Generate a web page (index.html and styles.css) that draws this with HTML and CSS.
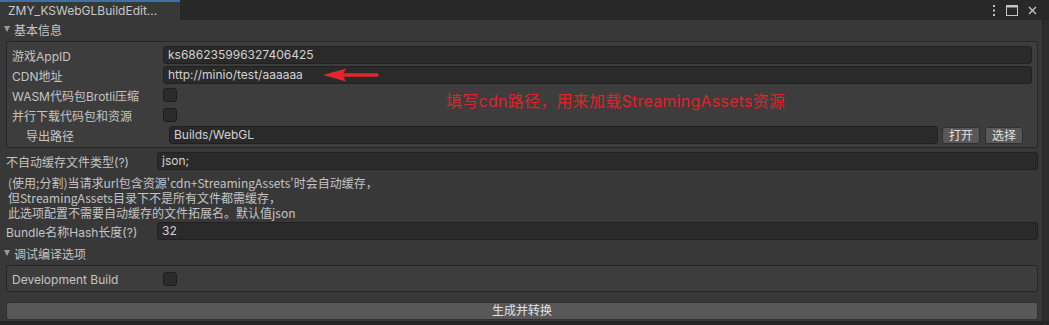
FILE: index.html
```html
<!DOCTYPE html>
<html lang="zh-CN">
<head>
    <meta charset="UTF-8">
    <meta name="viewport" content="width=device-width, initial-scale=1.0">
    <title>ZMY_KSWebGLBuildEditor</title>
    <link rel="stylesheet" href="styles.css">
</head>
<body>
    <div class="window">
        <div class="titlebar">
            <div class="tab">ZMY_KSWebGLBuildEdit...</div>
            <div class="win-icons">
                <svg width="4" height="11" viewBox="0 0 4 11"><rect x="1" y="0" width="2" height="2" fill="#c4c4c4"/><rect x="1" y="4.5" width="2" height="2" fill="#c4c4c4"/><rect x="1" y="9" width="2" height="2" fill="#c4c4c4"/></svg>
                <svg width="12" height="11" viewBox="0 0 12 11"><rect x="0.5" y="0.5" width="11" height="10" fill="none" stroke="#c4c4c4"/><rect x="0" y="0" width="12" height="2.5" fill="#c4c4c4"/></svg>
                <svg width="9" height="9" viewBox="0 0 9 9"><path d="M1 1 L8 8 M8 1 L1 8" stroke="#c4c4c4" stroke-width="1.4"/></svg>
            </div>
        </div>

        <div class="body">
            <div class="panel">
                <div class="foldout"><span class="tri"></span>基本信息</div>
                <div class="group">
                    <div class="row"><div class="label">游戏AppID</div><div class="field">ks686235996327406425</div></div>
                    <div class="row"><div class="label">CDN地址</div><div class="field">http://minio/test/aaaaaa</div></div>
                    <div class="row"><div class="label">WASM代码包Brotli压缩</div><div class="check"></div></div>
                    <div class="row"><div class="label">并行下载代码包和资源</div><div class="check"></div></div>
                    <div class="row indent">
                        <div class="label">导出路径</div>
                        <div class="field">Builds/WebGL</div>
                        <div class="btns">
                            <button class="btn">打开</button>
                            <button class="btn">选择</button>
                        </div>
                    </div>

                    <!-- red annotation drawn over the form -->
                    <svg class="arrow" width="60" height="14" viewBox="0 0 60 14">
                        <path d="M0 7 L23 0.5 L19.5 7 L23 13.5 Z" fill="#e3262c"/>
                        <path d="M18 7 L54 7" stroke="#e3262c" stroke-width="3.6" stroke-linecap="round"/>
                    </svg>
                    <div class="note">填写cdn路径，用来加载StreamingAssets资源</div>
                </div>

                <div class="row outer"><div class="label">不自动缓存文件类型(?)</div><div class="field">json;</div></div>
                <div class="help">
                    <p>(使用;分割)当请求url包含资源'cdn+StreamingAssets'时会自动缓存，</p>
                    <p>但StreamingAssets目录下不是所有文件都需缓存，</p>
                    <p>此选项配置不需要自动缓存的文件拓展名。默认值json</p>
                </div>
                <div class="row outer bundle"><div class="label">Bundle名称Hash长度(?)</div><div class="field">32</div></div>

                <div class="foldout second"><span class="tri"></span>调试编译选项</div>
                <div class="group">
                    <div class="row"><div class="label">Development Build</div><div class="check"></div></div>
                </div>

                <button class="build">生成并转换</button>
            </div>
            <div class="scroll"></div>
        </div>
        <div class="strip"></div>
    </div>
</body>
</html>
```

FILE: styles.css
```css
* {
    margin: 0;
    padding: 0;
    box-sizing: border-box;
}

body {
    background-color: #282828;
    font-family: 'Inter', 'Noto Sans CJK SC', sans-serif;
    font-size: 12px;
    color: #c4c4c4;
}

.window {
    width: 1049px;
    height: 325px;
    display: flex;
    flex-direction: column;
    overflow: hidden;
}

.titlebar {
    height: 20px;
    display: flex;
    align-items: stretch;
    background-color: #282828;
}

.tab {
    width: 180px;
    background-color: #383838;
    border-top: 2px solid #3a72b0;
    padding-left: 8px;
    line-height: 17px;
    font-size: 12px;
    color: #c8c8c8;
}

.win-icons {
    margin-left: auto;
    display: flex;
    align-items: center;
    gap: 10px;
    padding-right: 12px;
}

.body {
    flex: 1;
    display: flex;
}

.panel {
    width: 1042px;
    background-color: #383838;
    padding: 0 4px 0 6px;
}

.scroll {
    flex: 1;
    background-color: #2c2c2c;
    border-left: 1px solid #232323;
}

.strip {
    height: 4px;
    background-color: #242424;
}

.foldout {
    height: 18px;
    display: flex;
    align-items: center;
    gap: 4px;
    margin-left: -2px;
    color: #c4c4c4;
}

.foldout.second {
    margin-top: 4px;
}

.tri {
    width: 0;
    height: 0;
    border-left: 3.5px solid transparent;
    border-right: 3.5px solid transparent;
    border-top: 6px solid #9a9a9a;
}

.group {
    position: relative;
    margin-top: 3px;
    background-color: #3d3d3d;
    border: 1px solid #262626;
    border-radius: 3px;
    padding: 4px 5px 3px 5px;
    display: flex;
    flex-direction: column;
    gap: 2px;
}

.row {
    height: 18px;
    display: flex;
    align-items: center;
}

.label {
    width: 151px;
    flex-shrink: 0;
    white-space: nowrap;
}

.field {
    flex: 1;
    height: 18px;
    background-color: #2a2a2a;
    border: 1px solid #212121;
    border-radius: 3px;
    padding-left: 4px;
    line-height: 16px;
    color: #d2d2d2;
}

.check {
    width: 14px;
    height: 14px;
    background-color: #2b2b2b;
    border: 1px solid #1c1c1c;
    border-radius: 3px;
}

.row.indent {
    padding-left: 14px;
    padding-right: 9px;
}

.row.indent .label {
    width: 143px;
}

.btns {
    display: flex;
    gap: 5px;
    margin-left: 4px;
}

.btn {
    width: 38px;
    height: 17px;
    background-color: #585858;
    border: 1px solid #303030;
    border-radius: 3px;
    font-family: inherit;
    font-size: 12px;
    color: #e0e0e0;
    line-height: 15px;
}

.row.outer {
    margin-top: 4px;
}

.row.bundle {
    margin-top: 2px;
}

.help {
    margin-top: 5px;
    padding-left: 2px;
    line-height: 15px;
    font-family: 'Noto Sans CJK SC', sans-serif;
}

.arrow {
    position: absolute;
    left: 316px;
    top: 26px;
}

.note {
    position: absolute;
    left: 439px;
    top: 46px;
    font-size: 16px;
    letter-spacing: 0.25px;
    color: #dc252b;
    white-space: nowrap;
}

.build {
    display: block;
    width: 100%;
    height: 18px;
    margin-top: 10px;
    background-color: #585858;
    border: 1px solid #303030;
    border-radius: 3px;
    font-family: inherit;
    font-size: 12px;
    color: #e2e2e2;
    line-height: 16px;
}
```
